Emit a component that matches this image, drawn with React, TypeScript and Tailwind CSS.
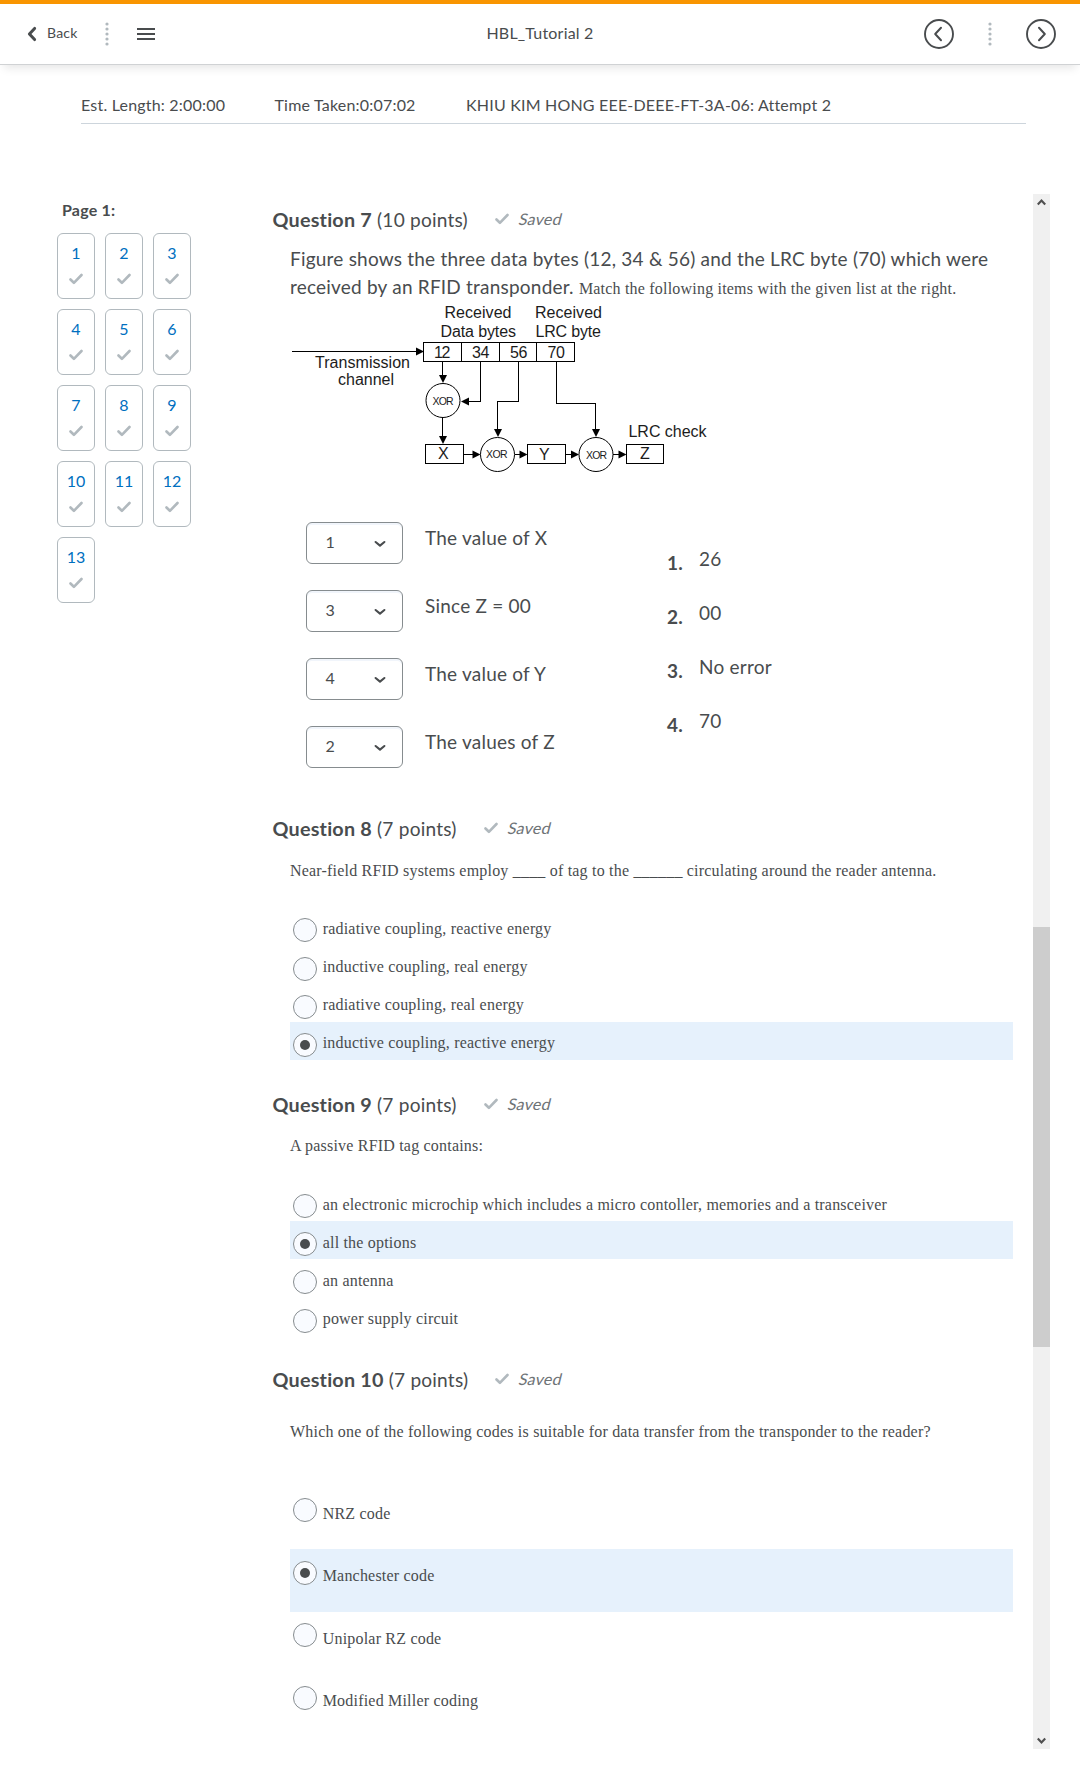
import React from "react";

const LATO = "font-['Lato',sans-serif]";
const SERIF = "font-['Liberation_Serif',serif]";

function Check({ className = "" }: { className?: string }) {
  return (
    <svg width="14" height="12" viewBox="0 0 14 12" fill="none" className={`block shrink-0 ${className}`}>
      <path d="M1.5 6.5 L4.9 9.8 L12.5 2" stroke="#b1b9be" strokeWidth="2.6" strokeLinecap="round" strokeLinejoin="round" />
    </svg>
  );
}

function Dots() {
  return (
    <svg width="4" height="24" viewBox="0 0 4 24" className="block">
      {[2, 7, 12, 17, 22].map((y) => (
        <circle key={y} cx="2" cy={y} r="1.6" fill="#b1b9be" />
      ))}
    </svg>
  );
}

function CircleArrow({ dir }: { dir: "left" | "right" }) {
  return (
    <svg width="32" height="32" viewBox="0 0 32 32" fill="none" stroke="#494c4e" className="block">
      <circle cx="16" cy="16" r="14" strokeWidth="1.9" />
      <path
        d={dir === "left" ? "M18 9.8 L12.2 16 L18 22.2" : "M14 9.8 L19.8 16 L14 22.2"}
        strokeWidth="2"
        strokeLinecap="round"
        strokeLinejoin="round"
      />
    </svg>
  );
}

function Header() {
  return (
    <header className="grid h-[65px] grid-cols-[1fr_auto_1fr] border-t-4 border-b border-t-[#f99500] border-b-[#d0d2d4] bg-white shadow-[0_7px_9px_-4px_rgba(0,0,0,0.10)]">
      <div className="flex h-[60px] items-center pl-[27px]">
        <svg width="10" height="16" viewBox="0 0 10 16" fill="none" className="block">
          <path d="M7.6 2.4 L2.4 8 L7.6 13.6" stroke="#494c4e" strokeWidth="3" strokeLinecap="round" strokeLinejoin="round" />
        </svg>
        <span className="-mt-[2px] ml-[10px] w-[32px] text-sm tracking-[0.2px]">Back</span>
        <div className="ml-[26px]"><Dots /></div>
        <div className="ml-[28px] flex flex-col gap-[3px]">
          <div className="h-[2px] w-[18px] bg-[#494c4e]" />
          <div className="h-[2px] w-[18px] bg-[#494c4e]" />
          <div className="h-[2px] w-[18px] bg-[#494c4e]" />
        </div>
      </div>
      <div className="flex h-[58px] items-center tracking-[0.2px]">HBL_Tutorial 2</div>
      <div className="flex h-[60px] items-center justify-end pr-[23px]">
        <CircleArrow dir="left" />
        <div className="mx-[33px]"><Dots /></div>
        <CircleArrow dir="right" />
      </div>
    </header>
  );
}

function Sidebar() {
  return (
    <nav className="w-[215px] shrink-0 pl-[57px]">
      <div className="h-[33px] pl-[5px] leading-[20px] font-bold tracking-[0.2px]">Page 1:</div>
      <div className="grid grid-cols-[repeat(3,38px)] gap-[10px]">
        {Array.from({ length: 13 }, (_, i) => (
          <div key={i} className="flex h-[66px] flex-col items-center rounded-[6px] border border-[#b1b9be] pt-[7px] text-[#006fbf]">
            <span className="block h-[32px] leading-[24px]">{i + 1}</span>
            <Check />
          </div>
        ))}
      </div>
    </nav>
  );
}

function QuestionTitle({ n, points }: { n: number; points: number }) {
  return (
    <h2 className="flex h-[28px] pl-[0.5px] text-[19.1px] leading-[27px] tracking-[0.2px]">
      <span><b className="text-[19.8px]">Question {n}</b> ({points} points)</span>
      <Check className="mt-[7px] ml-[27px]" />
      <span className="ml-[10px] block -skew-x-[14deg] text-base leading-[26px] tracking-[0.2px] text-[#6e7376]">Saved</span>
    </h2>
  );
}

function ArrowHead({ x, y, dir }: { x: number; y: number; dir: "r" | "l" | "d" }) {
  const d =
    dir === "r" ? `M${x} ${y} l-8 -4 v8 z` : dir === "l" ? `M${x} ${y} l8 -4 v8 z` : `M${x} ${y} l-4 -8 h8 z`;
  return <path d={d} fill="#000" stroke="none" />;
}

const labels: [string, number, number, number, number][] = [
  ["Received", 444.5, 318, 67, 16],
  ["Received", 535, 318, 67, 16],
  ["Data bytes", 440.5, 337, 75.5, 16],
  ["LRC byte", 535.5, 337, 65.5, 16],
  ["12", 434, 357.5, 16.5, 16],
  ["34", 472, 357.5, 17.5, 16],
  ["56", 510, 357.5, 17.5, 16],
  ["70", 547.5, 357.5, 17.5, 16],
  ["Transmission", 315, 368, 95, 16],
  ["channel", 338, 385, 56, 16],
  ["XOR", 432.5, 405, 21, 10.5],
  ["XOR", 486, 458, 21.5, 10.5],
  ["XOR", 586, 459, 21, 10.5],
  ["X", 438, 459, 10.5, 16],
  ["Y", 539, 460, 10.5, 16],
  ["Z", 640, 459, 9.5, 16],
  ["LRC check", 628.5, 437, 78, 16],
];

/* Flow of the received bytes through the XOR stages */
function LrcDiagram() {
  return (
    <svg width="440" height="175" viewBox="290 303 440 175" className="block font-['Liberation_Sans',sans-serif]">
      <g fill="none" stroke="#000" strokeWidth="1" shapeRendering="crispEdges">
        <rect x="423.5" y="342.5" width="151" height="19" />
        <path d="M461.5 342V362M499.5 342V362M536.5 342V362" />
        <path d="M292 351.5H416M442.5 362V376M480.5 362V401.5H468M518.5 362V401.5H497.5V430M556.5 362V403.5H595.5V430M442.5 417V438" />
        <rect x="425.5" y="444.5" width="38" height="19" />
        <rect x="527.5" y="444.5" width="38" height="19" />
        <rect x="626.5" y="444.5" width="37" height="19" />
        <path d="M464 454.5H474M515 454.5H521M566 454.5H572M613 454.5H619" />
      </g>
      <g fill="none" stroke="#000" strokeWidth="1">
        <circle cx="443" cy="400.5" r="17" />
        <circle cx="497.5" cy="454.5" r="17" />
        <circle cx="596" cy="454.5" r="17" />
      </g>
      <ArrowHead x={424} y={351.5} dir="r" />
      <ArrowHead x={443} y={383} dir="d" />
      <ArrowHead x={461} y={401.5} dir="l" />
      <ArrowHead x={443} y={444} dir="d" />
      <ArrowHead x={498} y={437} dir="d" />
      <ArrowHead x={596} y={437} dir="d" />
      <ArrowHead x={480.5} y={454.5} dir="r" />
      <ArrowHead x={527.5} y={454.5} dir="r" />
      <ArrowHead x={579} y={454.5} dir="r" />
      <ArrowHead x={626.5} y={454.5} dir="r" />
      {labels.map(([t, x, y, w, s], i) => (
        <text key={i} x={x} y={y} fontSize={s} textLength={w} fill="#1c1c1c">{t}</text>
      ))}
    </svg>
  );
}

function Select({ value }: { value: string }) {
  return (
    <div className="flex h-[42px] w-[97px] items-center justify-between rounded-[6px] border border-[#868c8f] pr-[16px] pl-[18.5px] text-base shadow-[inset_0_2px_0_#f1f5fb]">
      <span className="-mt-[2px]">{value}</span>
      <svg width="12" height="8" viewBox="0 0 12 8" fill="none" className="mt-[2px] block">
        <path d="M1.6 2 L6 5.6 L10.4 2" stroke="#494c4e" strokeWidth="2.1" strokeLinecap="round" strokeLinejoin="round" />
      </svg>
    </div>
  );
}

const matches = [
  ["1", "The value of X"],
  ["3", "Since Z = 00"],
  ["4", "The value of Y"],
  ["2", "The values of Z"],
];

const choices = ["26", "00", "No error", "70"];

function Radio({ checked }: { checked: boolean }) {
  return (
    <span className="flex h-[24px] w-[24px] shrink-0 items-center justify-center rounded-full border border-[#868c8f] bg-[#f9fbff]">
      {checked && <span className="block h-[10px] w-[10px] rounded-full bg-[#494c4e]" />}
    </span>
  );
}

function Options({ items, selected, tall = false }: { items: string[]; selected: number; tall?: boolean }) {
  return (
    <div className={`ml-[18px] w-[723px] text-base tracking-[0.2px] ${SERIF}`}>
      {items.map((t, i) => (
        <div
          key={t}
          className={`flex pl-[3px] ${tall ? "h-[62.5px] pt-[11.6px]" : "h-[38.0625px] pt-[11px]"} ${i === selected ? "bg-[#e6f1fc]" : ""}`}
        >
          <Radio checked={i === selected} />
          <span className={`ml-[5.7px] leading-[20px] ${tall ? "pt-[5.6px]" : "pt-[0.5px]"}`}>{t}</span>
        </div>
      ))}
    </div>
  );
}

function Main() {
  return (
    <main className="w-[761px] shrink-0 pt-[6px]">
      <QuestionTitle n={7} points={10} />
      <div className="h-[65px] pt-[11px] pl-[18px] text-[19px] leading-[28px] tracking-[0.21px]">
        Figure shows the three data bytes (12, 34 &amp; 56) and the LRC byte (70) which were
        <br />
        received by an RFID transponder. <span className={`text-base tracking-[0.2px] ${SERIF}`}>Match the following items with the given list at the right.</span>
      </div>
      <div className="h-[223px] pt-[4px] pl-[18px]"><LrcDiagram /></div>
      <div className="flex h-[287px] pl-[34px] text-[19px] leading-[28px] tracking-[0.22px]">
        <div className="flex w-[361px] flex-col gap-[26px]">
          {matches.map(([v, t]) => (
            <div key={v} className="flex h-[42px]">
              <Select value={v} />
              <span className="ml-[22px] pt-[2px]">{t}</span>
            </div>
          ))}
        </div>
        <div className="flex flex-col gap-[26px] pt-[23px]">
          {choices.map((t, i) => (
            <div key={t} className="flex h-[28px]">
              <b className="w-[32px] pt-[4px]">{i + 1}.</b>
              <span>{t}</span>
            </div>
          ))}
        </div>
      </div>
      <div className="h-[98.453125px] pt-[6px]">
        <QuestionTitle n={8} points={7} />
        <p className={`pt-[13.5px] pl-[18px] text-base leading-[28px] tracking-[0.2px] ${SERIF}`}>
          Near-field RFID systems employ ____ of tag to the ______ circulating around the reader antenna.
        </p>
      </div>
      <Options
        items={["radiative coupling, reactive energy", "inductive coupling, real energy", "radiative coupling, real energy", "inductive coupling, reactive energy"]}
        selected={3}
      />
      <div className="h-[123.640625px] pt-[31px]">
        <QuestionTitle n={9} points={7} />
        <p className={`pt-[13.5px] pl-[18px] text-base leading-[28px] tracking-[0.2px] ${SERIF}`}>A passive RFID tag contains:</p>
      </div>
      <Options
        items={["an electronic microchip which includes a micro contoller, memories and a transceiver", "all the options", "an antenna", "power supply circuit"]}
        selected={1}
      />
      <div className="h-[150.90625px] pt-[30.5px]">
        <QuestionTitle n={10} points={7} />
        <p className={`pt-[23.5px] pl-[18px] text-base leading-[28px] tracking-[0.2px] ${SERIF}`}>
          Which one of the following codes is suitable for data transfer from the transponder to the reader?
        </p>
      </div>
      <Options items={["NRZ code", "Manchester code", "Unipolar RZ code", "Modified Miller coding"]} selected={1} tall />
    </main>
  );
}

function Chevron({ up = false }: { up?: boolean }) {
  return (
    <svg width="17" height="17" viewBox="0 0 17 17" fill="none" className={`block ${up ? "" : "rotate-180"}`}>
      <path d="M4.8 10.4 L8.5 6.6 L12.2 10.4" stroke="#505050" strokeWidth="2.2" />
    </svg>
  );
}

function Scrollbar() {
  return (
    <div className="-mt-[6px] flex h-[1555px] w-[17px] shrink-0 flex-col bg-[#f0f0f0]">
      <Chevron up />
      <div className="mt-[716px] mb-auto h-[420px] bg-[#cdcdcd]" />
      <Chevron />
    </div>
  );
}

export default function App() {
  return (
    <div className={`h-[1767px] w-[1080px] overflow-hidden bg-white text-base text-[#494c4e] ${LATO}`}>
      <Header />
      <div className="mr-[54px] ml-[81px] flex h-[59px] border-b border-[#cdd5dc] pt-[27.5px] leading-[24px] tracking-[0.2px]">
        <span className="w-[193.5px]">Est. Length: 2:00:00</span>
        <span className="w-[191.5px]">Time Taken:0:07:02</span>
        <span>KHIU KIM HONG EEE-DEEE-FT-3A-06: Attempt 2</span>
      </div>
      <div className="mt-[76px] flex">
        <Sidebar />
        <div className="ml-[57px]">
          <Main />
        </div>
        <Scrollbar />
      </div>
    </div>
  );
}
